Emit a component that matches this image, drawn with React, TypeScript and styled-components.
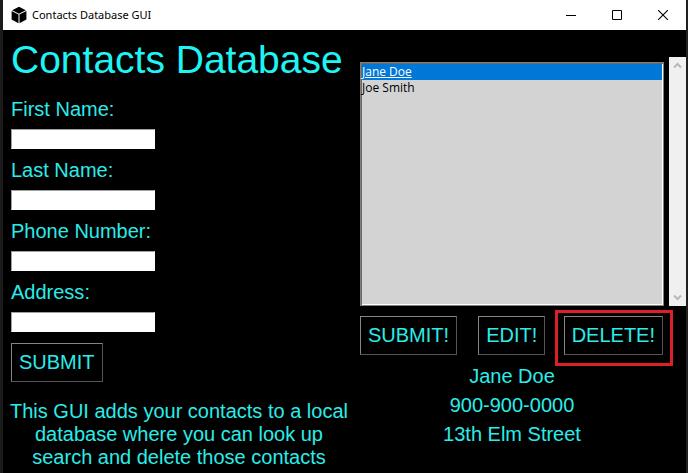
import React, { useState } from "react";
import styled, { createGlobalStyle } from "styled-components";

const CYAN = "#2bece8";

const GlobalStyle = createGlobalStyle`
  * { box-sizing: border-box; }
  body {
    margin: 0;
    background: #000;
    font-family: "Liberation Sans", Arial, sans-serif;
  }
`;

const Window = styled.div`
  display: flex;
  flex-direction: column;
  min-height: 100vh;
  border-left: 3px solid #1b1b1b;
  border-right: 2px solid #202020;
  background: #000;
  color: ${CYAN};
`;

const TitleBar = styled.header`
  display: flex;
  align-items: center;
  height: 30px;
  padding-left: 8px;
  background: #fff;
  color: #000;
`;

const WindowTitle = styled.span`
  flex: 1;
  margin-left: 5px;
  font: 11px/16px "Noto Sans", "Open Sans", sans-serif;
`;

const WindowButton = styled.button`
  display: flex;
  align-items: center;
  justify-content: center;
  width: 46px;
  height: 30px;
  padding: 0 0 1px;
  border: 0;
  background: #fff;
  color: #000;
`;

const Body = styled.main`
  display: grid;
  grid-template-columns: minmax(336px, 1fr) minmax(326px, 1fr);
  column-gap: 13px;
  padding-left: 8px;
  align-items: start;

  @media (max-width: 720px) {
    grid-template-columns: 336px 1fr;
  }
`;

const ContactForm = styled.form`
  display: flex;
  flex-direction: column;
  align-items: flex-start;
`;

const Heading = styled.h1`
  margin: 0 0 4px;
  color: #1ff4f4;
  font-size: 39px;
  font-weight: 400;
  line-height: 60px;
  white-space: nowrap;
`;

const Field = styled.div`
  display: flex;
  flex-direction: column;
  gap: 5px;
  margin-bottom: 6px;
`;

const Label = styled.label`
  font-size: 20px;
  line-height: 30px;
`;

const TextBox = styled.input`
  width: 144px;
  height: 20px;
  padding: 0 2px;
  border: 1px solid #fff;
  border-top-color: #a0a0a0;
  border-left-color: #a0a0a0;
  border-radius: 0;
  background: #fff;
  color: #000;
`;

const ActionButton = styled.button`
  height: 39px;
  padding: 0 7px;
  border: 1px solid #555;
  border-top-color: #858585;
  border-left-color: #858585;
  background: #000;
  color: ${CYAN};
  font: 20px/23px "Liberation Sans", Arial, sans-serif;
  white-space: nowrap;
`;

const FormSubmit = styled(ActionButton)`
  margin-top: 5px;
`;

const Description = styled.p`
  align-self: center;
  margin: 18px 0 0;
  font-size: 20px;
  line-height: 23px;
  text-align: center;
  white-space: nowrap;
`;

const Contacts = styled.section`
  padding-top: 27px;
`;

const ListRow = styled.div`
  display: flex;
  align-items: stretch;
  gap: 5px;
`;

const ContactList = styled.div`
  flex: 1;
  height: 244px;
  margin-top: 5px;
  padding: 1px;
  border: 1px solid #808080;
  box-shadow: inset 1px 1px #696969, inset -1px -1px #fff;
  background: #d3d3d3;
`;

const ContactOption = styled.button<{ $selected: boolean }>`
  display: block;
  width: 100%;
  height: 16px;
  padding: 0;
  border: 0;
  background: ${(p) => (p.$selected ? "#0078d7" : "transparent")};
  color: ${(p) => (p.$selected ? "#fff" : "#000")};
  font: 12px/16px "Open Sans", "Noto Sans", sans-serif;
  text-align: left;
  text-decoration: ${(p) => (p.$selected ? "underline" : "none")};
`;

const ScrollBar = styled.div`
  display: flex;
  flex-direction: column;
  justify-content: space-between;
  width: 17px;
  background: #f0f0f0;
`;

const ScrollButton = styled.button`
  display: flex;
  align-items: center;
  justify-content: center;
  width: 17px;
  height: 17px;
  padding: 0;
  border: 0;
  background: transparent;
  color: #b8b8b8;
`;

const Actions = styled.div`
  display: flex;
  align-items: flex-start;
  justify-content: space-between;
  margin: 4px 13px 0 0;
`;

const ActionSlot = styled.div<{ $highlighted?: boolean }>`
  padding: ${(p) => (p.$highlighted ? "3px 7px 8px 6px" : "6px 0 0")};
  border: ${(p) => (p.$highlighted ? "3px solid #dc1f28" : "0")};
`;

const ActionPair = styled.div`
  display: flex;
  gap: 21px;
`;

const Details = styled.address`
  display: flex;
  flex-direction: column;
  align-items: center;
  margin: -4px 22px 0 0;
  font-size: 20px;
  font-style: normal;
  line-height: 29px;
`;

const fields = ["First Name", "Last Name", "Phone Number", "Address"];
const contacts = ["Jane Doe", "Joe Smith"];

function CubeIcon() {
  return (
    <svg width="16" height="18" viewBox="0 0 16 18" aria-hidden="true">
      <path d="M8 .8 14.8 4.2 8 7.7 1.2 4.2Z" />
      <path d="M.6 5.1 7.5 8.6V17.2L.6 13.6Z" />
      <path d="M15.4 5.1 8.5 8.6V17.2l6.9-3.6Z" />
    </svg>
  );
}

export default function App() {
  const [selected, setSelected] = useState(0);

  return (
    <>
      <GlobalStyle />
      <Window>
        <TitleBar>
          <CubeIcon />
          <WindowTitle>Contacts Database GUI</WindowTitle>
          <WindowButton type="button" aria-label="Minimize">
            <svg width="10" height="10" stroke="currentColor"><path d="M0 5.5H10" /></svg>
          </WindowButton>
          <WindowButton type="button" aria-label="Maximize">
            <svg width="10" height="10" fill="none" stroke="currentColor"><path d="M.5.5h9v9h-9Z" /></svg>
          </WindowButton>
          <WindowButton type="button" aria-label="Close">
            <svg width="10" height="10" stroke="currentColor" strokeWidth="1.1"><path d="M0 0 10 10M10 0 0 10" /></svg>
          </WindowButton>
        </TitleBar>
        <Body>
          <ContactForm onSubmit={(e) => e.preventDefault()}>
            <Heading>Contacts Database</Heading>
            {fields.map((name) => (
              <Field key={name}>
                <Label htmlFor={name}>{name}:</Label>
                <TextBox id={name} type="text" />
              </Field>
            ))}
            <FormSubmit type="submit">SUBMIT</FormSubmit>
            <Description>
              This GUI adds your contacts to a local
              <br />
              database where you can look up
              <br />
              search and delete those contacts
            </Description>
          </ContactForm>
          <Contacts>
            <ListRow>
              <ContactList role="listbox" aria-label="Contacts">
                {contacts.map((name, i) => (
                  <ContactOption
                    key={name}
                    type="button"
                    role="option"
                    aria-selected={i === selected}
                    $selected={i === selected}
                    onClick={() => setSelected(i)}
                  >
                    {name}
                  </ContactOption>
                ))}
              </ContactList>
              <ScrollBar>
                <ScrollButton type="button" aria-label="Scroll up">
                  <svg width="9" height="7" fill="none" stroke="currentColor" strokeWidth="2"><path d="M1 5.5 4.5 2 8 5.5" /></svg>
                </ScrollButton>
                <ScrollButton type="button" aria-label="Scroll down">
                  <svg width="9" height="7" fill="none" stroke="currentColor" strokeWidth="2"><path d="M1 1.5 4.5 5 8 1.5" /></svg>
                </ScrollButton>
              </ScrollBar>
            </ListRow>
            <Actions>
              <ActionPair>
                <ActionSlot><ActionButton type="button">SUBMIT!</ActionButton></ActionSlot>
                <ActionSlot><ActionButton type="button">EDIT!</ActionButton></ActionSlot>
              </ActionPair>
              <ActionSlot $highlighted><ActionButton type="button">DELETE!</ActionButton></ActionSlot>
            </Actions>
            <Details>
              <span>Jane Doe</span>
              <span>900-900-0000</span>
              <span>13th Elm Street</span>
            </Details>
          </Contacts>
        </Body>
      </Window>
    </>
  );
}
